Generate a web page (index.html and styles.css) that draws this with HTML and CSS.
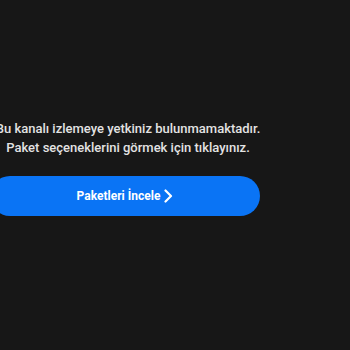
FILE: index.html
```html
<!DOCTYPE html>
<html lang="tr">
<head>
<meta charset="utf-8">
<link rel="stylesheet" href="styles.css">
</head>
<body>
<div class="panel">
  <p class="msg">Bu kanalı izlemeye yetkiniz bulunmamaktadır.</p>
  <p class="msg">Paket seçeneklerini görmek için tıklayınız.</p>
  <button class="cta" type="button">
    <span class="cta-label">Paketleri İncele</span>
    <svg class="chev" width="9" height="14" viewBox="0 0 9 14"><polyline points="1.5,1.5 7,7 1.5,12.5" fill="none" stroke="#fff" stroke-width="2.2" stroke-linecap="round" stroke-linejoin="round"/></svg>
  </button>
</div>
</body>
</html>
```
FILE: styles.css
```css
html, body {
  margin: 0;
  padding: 0;
  background: #171717;
  width: 350px;
  height: 350px;
  overflow: hidden;
}
.panel {
  width: 256px;
  padding-top: 119px;
  display: flex;
  flex-direction: column;
  align-items: center;
  font-family: Roboto, "Noto Sans", sans-serif;
}
.msg {
  margin: 0;
  white-space: nowrap;
  color: #e3e3e3;
  font-size: 13px;
  line-height: 19px;
  font-weight: 500;
}
.cta {
  margin-top: 19px;
  margin-right: 6px;
  flex: none;
  width: 270px;
  height: 40px;
  border: 0;
  border-radius: 20px;
  background: #0a74f5;
  color: #fff;
  display: flex;
  align-items: center;
  justify-content: center;
  gap: 4px;
  font-family: Roboto, "Noto Sans", sans-serif;
  font-size: 12px;
  font-weight: 700;
  padding: 0;
}
.chev { display: block; }
```
